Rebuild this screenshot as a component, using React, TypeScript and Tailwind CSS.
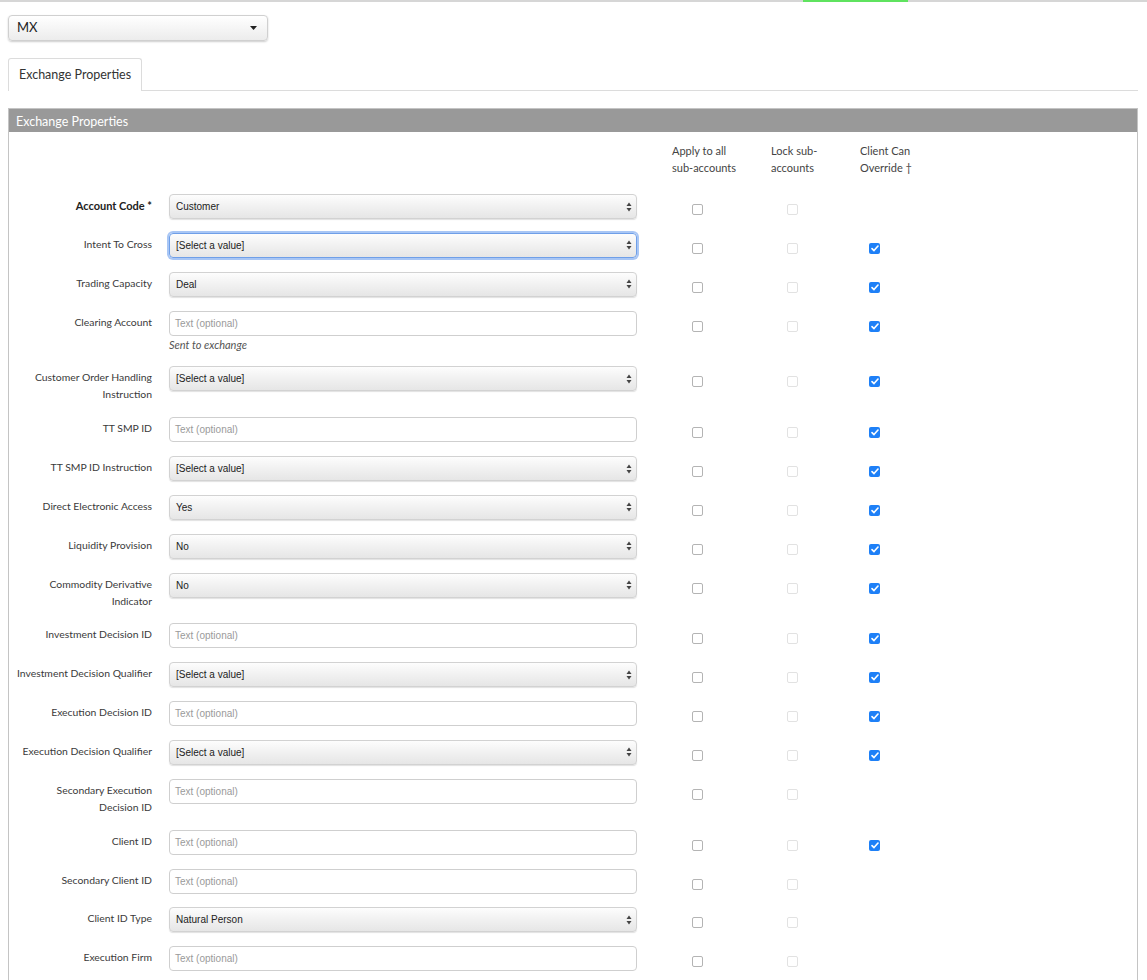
import React from 'react'

type Row = {
  label: string
  bold?: boolean
  kind: 'select' | 'text'
  value?: string
  help?: string
  focus?: boolean
  override?: boolean
}

const ROWS: Row[] = [
  { label: 'Account Code *', bold: true, kind: 'select', value: 'Customer' },
  { label: 'Intent To Cross', kind: 'select', value: '[Select a value]', focus: true, override: true },
  { label: 'Trading Capacity', kind: 'select', value: 'Deal', override: true },
  { label: 'Clearing Account', kind: 'text', help: 'Sent to exchange', override: true },
  { label: 'Customer Order Handling\nInstruction', kind: 'select', value: '[Select a value]', override: true },
  { label: 'TT SMP ID', kind: 'text', override: true },
  { label: 'TT SMP ID Instruction', kind: 'select', value: '[Select a value]', override: true },
  { label: 'Direct Electronic Access', kind: 'select', value: 'Yes', override: true },
  { label: 'Liquidity Provision', kind: 'select', value: 'No', override: true },
  { label: 'Commodity Derivative\nIndicator', kind: 'select', value: 'No', override: true },
  { label: 'Investment Decision ID', kind: 'text', override: true },
  { label: 'Investment Decision Qualifier', kind: 'select', value: '[Select a value]', override: true },
  { label: 'Execution Decision ID', kind: 'text', override: true },
  { label: 'Execution Decision Qualifier', kind: 'select', value: '[Select a value]', override: true },
  { label: 'Secondary Execution\nDecision ID', kind: 'text' },
  { label: 'Client ID', kind: 'text', override: true },
  { label: 'Secondary Client ID', kind: 'text' },
  { label: 'Client ID Type', kind: 'select', value: 'Natural Person' },
  { label: 'Execution Firm', kind: 'text' },
]

function UpDown() {
  return (
    <svg width="6" height="10" viewBox="0 0 6 10" className="shrink-0">
      <path d="M3 0.5 L5.5 4 H0.5 Z" fill="#444" />
      <path d="M3 9.5 L5.5 6 H0.5 Z" fill="#444" />
    </svg>
  )
}

function Check({ kind }: { kind: 'plain' | 'disabled' | 'checked' }) {
  if (kind === 'checked') {
    return (
      <span className="w-[11px] h-[11px] rounded-[2px] bg-[#1e80f7] flex items-center justify-center">
        <svg width="8" height="7" viewBox="0 0 8 7">
          <path d="M1 3.6 L3 5.6 L7 1" stroke="#fff" strokeWidth="1.6" fill="none" strokeLinecap="round" strokeLinejoin="round" />
        </svg>
      </span>
    )
  }
  return (
    <span
      className={`w-[11px] h-[11px] rounded-[2px] bg-white border ${kind === 'plain' ? 'border-[#b4b4b4]' : 'border-[#e2e2e2]'}`}
    />
  )
}

function Control({ row }: { row: Row }) {
  if (row.kind === 'text') {
    return (
      <div className="h-[25px] w-[468px] rounded-[4px] border border-[#cfcfcf] bg-white flex items-center px-[5px] text-[10px] text-[#9a9a9a] font-['Liberation_Sans',Arial,sans-serif]">
        Text (optional)
      </div>
    )
  }
  return (
    <div
      className={`h-[25px] w-[468px] rounded-[4px] border bg-gradient-to-b from-[#fdfdfd] via-[#f1f1f1] to-[#e6e6e6] flex items-center justify-between pl-[6px] pr-[4px] text-[10px] text-[#222] font-['Liberation_Sans',Arial,sans-serif] shadow-[0_1px_1px_rgba(0,0,0,0.12)] ${row.focus ? 'border-[#6f9fe8] ring-2 ring-[#a8c6f5]' : 'border-[#d2d2d2]'}`}
    >
      <span>{row.value}</span>
      <UpDown />
    </div>
  )
}

export default function App() {
  return (
    <div className="min-h-screen bg-white font-['Lato','Open_Sans',sans-serif] text-[#333]">
      <div className="h-[2px] bg-[#d6d6d6] flex">
        <div className="ml-[803px] w-[105px] bg-[#5fe35f]" />
      </div>

      <div className="pl-[8px] pr-[9px]">
        <div className="mt-[13px] h-[26px] w-[260px] rounded-[4px] border border-[#d0d0d0] bg-gradient-to-b from-white to-[#ececec] shadow-[0_1px_2px_rgba(0,0,0,0.2)] flex items-center justify-between pl-[8px] pr-[10px] text-[13px] text-[#222]">
          <span>MX</span>
          <svg width="7" height="4" viewBox="0 0 7 4">
            <path d="M0 0 H7 L3.5 4 Z" fill="#222" />
          </svg>
        </div>

        <div className="mt-[17px] border-b border-[#dcdcdc] flex">
          <div className="h-[33px] -mb-px px-[10px] flex items-center border border-b-0 border-[#dcdcdc] rounded-t-[3px] bg-white text-[12.5px] text-[#333]">
            Exchange Properties
          </div>
        </div>

        <div className="mt-[17px] border border-[#c4c4c4] border-b-0">
          <div className="h-[23px] bg-[#999999] flex items-center pl-[7px] pt-[3px] text-[12.5px] text-white">
            Exchange Properties
          </div>

          <div className="pt-[10px] pb-[60px]">
            <div className="flex text-[11px] leading-[17px] text-[#444] mb-[18px]">
              <div className="w-[663px]" />
              <div className="w-[99px]">Apply to all<br />sub-accounts</div>
              <div className="w-[89px]">Lock sub-<br />accounts</div>
              <div>Client Can<br />Override †</div>
            </div>

            {ROWS.map((row) => (
              <div key={row.label} className="flex items-start mb-[13.85px]">
                <div
                  className={`w-[143px] shrink-0 text-right whitespace-pre-line pt-[3px] leading-[17px] ${row.bold ? 'text-[11px] font-bold text-[#222]' : 'text-[10.4px] text-[#3a3a3a]'}`}
                >
                  {row.label}
                </div>
                <div className="ml-[17px] w-[468px] shrink-0">
                  <Control row={row} />
                  {row.help && (
                    <div className="text-[11px] italic leading-[17px] text-[#555]">{row.help}</div>
                  )}
                </div>
                <div className="ml-[35px] w-[99px] pl-[20px] pt-[10px] flex">
                  <Check kind="plain" />
                </div>
                <div className="w-[89px] pl-[16px] pt-[10px] flex">
                  <Check kind="disabled" />
                </div>
                <div className="pl-[9px] pt-[10px] flex">
                  {row.override && <Check kind="checked" />}
                </div>
              </div>
            ))}
          </div>
        </div>
      </div>
    </div>
  )
}
